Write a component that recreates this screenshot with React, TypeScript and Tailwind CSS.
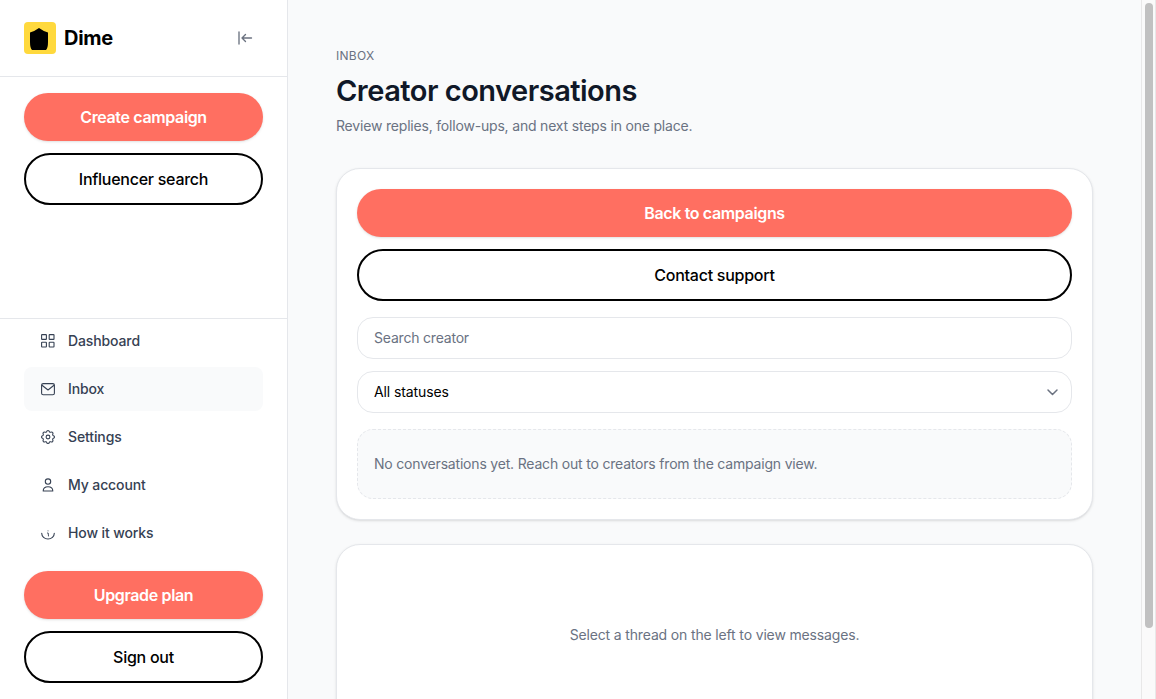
import type { ReactNode } from 'react';

const iconProps = {
  width: 16,
  height: 16,
  viewBox: '0 0 16 16',
  fill: 'none',
  stroke: 'currentColor',
  strokeWidth: 1.1,
  strokeLinecap: 'round' as const,
  strokeLinejoin: 'round' as const,
};

const GridIcon = () => (
  <svg {...iconProps}>
    <rect x="1.6" y="1.6" width="4.8" height="4.8" rx="0.5" />
    <rect x="9.2" y="1.6" width="4.8" height="4.8" rx="0.5" />
    <rect x="1.6" y="9.2" width="4.8" height="4.8" rx="0.5" />
    <rect x="9.2" y="9.2" width="4.8" height="4.8" rx="0.5" />
  </svg>
);

const MailIcon = () => (
  <svg {...iconProps}>
    <rect x="1.6" y="2.6" width="12.8" height="11.2" rx="1.6" />
    <path d="M2 4.2 8 9l6-4.8" />
  </svg>
);

// Eight rounded teeth around the hub.
const gearPath = (() => {
  const at = (radius: number, degrees: number) => {
    const a = (degrees * Math.PI) / 180;
    return `${(8 + radius * Math.sin(a)).toFixed(2)} ${(8 - radius * Math.cos(a)).toFixed(2)}`;
  };
  let d = `M${at(5.1, -22.5)}`;
  for (let i = 0; i < 8; i += 1) {
    const a = i * 45;
    d += `L${at(5.5, a - 14)}Q${at(6.6, a - 10)} ${at(6.5, a)}Q${at(6.6, a + 10)} ${at(5.5, a + 14)}L${at(5.1, a + 22.5)}`;
  }
  return `${d}Z`;
})();

const GearIcon = () => (
  <svg {...iconProps}>
    <circle cx="8" cy="8" r="1.9" />
    <path d={gearPath} />
  </svg>
);

const UserIcon = () => (
  <svg {...iconProps}>
    <circle cx="8" cy="4.6" r="2.7" />
    <path d="M3.2 14c0-2.6 2.1-4.3 4.8-4.3s4.8 1.7 4.8 4.3z" />
  </svg>
);

const InfoIcon = () => (
  <svg {...iconProps}>
    <path d="M1.7 8.3a6.3 5.7 0 0 0 12.6 0" />
    <path d="M7.5 8h.7l.3 3M8 5.8v.1" strokeWidth="0.9" />
  </svg>
);

const navItems: { label: string; icon: ReactNode; active?: boolean }[] = [
  { label: 'Dashboard', icon: <GridIcon /> },
  { label: 'Inbox', icon: <MailIcon />, active: true },
  { label: 'Settings', icon: <GearIcon /> },
  { label: 'My account', icon: <UserIcon /> },
  { label: 'How it works', icon: <InfoIcon /> },
];

const PrimaryButton = ({ children }: { children: ReactNode }) => (
  <button className="h-12 w-full shrink-0 rounded-full bg-[#ff6f61] text-base font-semibold tracking-[-0.36px] text-white shadow-sm">
    {children}
  </button>
);

const OutlineButton = ({ children }: { children: ReactNode }) => (
  <button className="h-[52px] w-full shrink-0 rounded-full border-2 border-black bg-white text-base font-medium tracking-[-0.26px] text-black">
    {children}
  </button>
);

function Sidebar() {
  return (
    <aside className="flex w-72 shrink-0 flex-col border-r border-gray-200 bg-white">
      <div className="flex h-[77px] shrink-0 items-center justify-between border-b border-gray-200 pr-[34px] pl-6">
        <div className="flex items-center gap-2">
          <svg width="32" height="32" viewBox="0 0 32 32">
            <rect width="32" height="32" rx="4" fill="#ffd93d" />
            <path d="M15 6 Q19 9 24 10.5V20Q24 26 22 28H8Q6 26 6 20V10.5Q11 9 15 6z" fill="#000" />
          </svg>
          <span className="text-xl font-bold tracking-[-0.25px] text-black">Dime</span>
        </div>
        <svg width="16" height="16" viewBox="0 0 16 16" fill="none" stroke="#6b7280" strokeWidth="1.35" strokeLinecap="round" strokeLinejoin="round">
          <path d="M2 2v12M5 8h9.5M8.5 4.5 5 8l3.5 3.5" />
        </svg>
      </div>
      <div className="flex flex-1 flex-col gap-3 px-6 pt-4">
        <PrimaryButton>Create campaign</PrimaryButton>
        <OutlineButton>Influencer search</OutlineButton>
      </div>
      <div className="flex flex-col border-t border-gray-200 px-6 pb-4">
        <nav className="flex flex-col gap-1">
          {navItems.map((item) => (
            <a
              key={item.label}
              className={`flex h-11 items-center gap-3 rounded-lg px-4 text-sm font-medium tracking-[-0.12px] text-gray-700 ${item.active ? 'bg-gray-50' : ''}`}
            >
              {item.icon}
              {item.label}
            </a>
          ))}
        </nav>
        <div className="mt-4 flex flex-col gap-3">
          <PrimaryButton>Upgrade plan</PrimaryButton>
          <OutlineButton>Sign out</OutlineButton>
        </div>
      </div>
    </aside>
  );
}

export default function App() {
  return (
    <div className="flex h-[699px] w-full overflow-hidden bg-gray-50 font-['Inter',sans-serif]">
      <Sidebar />
      <main className="min-w-0 flex-1 overflow-hidden px-12 pt-12">
        <p className="text-xs tracking-wide text-gray-500 uppercase">Inbox</p>
        <h1 className="mt-[9px] text-[29px] leading-9 font-semibold tracking-[-0.5px] text-gray-900">Creator conversations</h1>
        <p className="mt-[7px] text-sm tracking-[-0.19px] text-gray-500">
          Review replies, follow-ups, and next steps in one place.
        </p>

        <section className="mt-8 flex flex-col gap-4 rounded-3xl border border-gray-200 bg-white p-5 shadow-sm">
          <div className="flex flex-col gap-3">
            <PrimaryButton>Back to campaigns</PrimaryButton>
            <OutlineButton>Contact support</OutlineButton>
          </div>
          <div className="flex flex-col gap-3">
            <input
              placeholder="Search creator"
              className="h-[42px] rounded-2xl border border-gray-200 px-4 pb-0.5 text-sm tracking-[-0.2px] placeholder:text-gray-500"
            />
            <div className="flex h-[42px] items-center justify-between rounded-2xl border border-gray-200 pr-3 pl-4 text-sm tracking-[-0.1px] text-black">
              All statuses
              <svg width="14" height="14" viewBox="0 0 14 14" fill="none" stroke="#6b7280" strokeWidth="1.5" strokeLinecap="round" strokeLinejoin="round">
                <path d="m3 5 4.5 4.5L12 5" />
              </svg>
            </div>
          </div>
          <div className="flex h-[70px] items-center rounded-2xl border border-dashed border-gray-200 bg-gray-50 px-4 text-sm tracking-[-0.19px] text-gray-500">
            No conversations yet. Reach out to creators from the campaign view.
          </div>
        </section>

        <section className="mt-6 rounded-3xl border border-gray-200 bg-white py-20 text-center text-sm tracking-[-0.15px] text-gray-500 shadow-sm">
          Select a thread on the left to view messages.
        </section>
      </main>
      <div className="flex w-[15px] shrink-0 border-r border-l border-[#e8e8e8] bg-[#fafafa] pt-[3px] pl-[3px]">
        <div className="h-[625px] w-2 rounded-full bg-[#c1c1c1]" />
      </div>
    </div>
  );
}
